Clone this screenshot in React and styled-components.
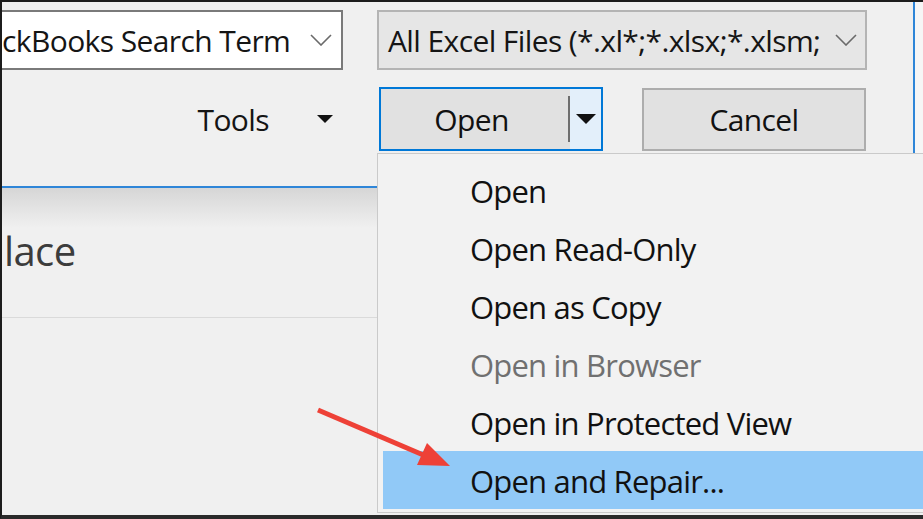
import React from 'react';
import styled, { createGlobalStyle } from 'styled-components';

const GlobalStyle = createGlobalStyle`
    html, body {
        margin: 0;
        padding: 0;
        background: #f0f0f0;
    }
    body {
        font-family: "Open Sans", "Noto Sans", sans-serif;
        color: #111;
    }
`;

const menuItems = [
    { label: "Open" },
    { label: "Open Read-Only" },
    { label: "Open as Copy" },
    { label: "Open in Browser", disabled: true },
    { label: "Open in Protected View" },
    { label: "Open and Repair...", active: true },
];

function Chevron() {
    return (
        <svg width="22" height="12" viewBox="0 0 22 12">
            <polyline points="1,1 11,11 21,1" fill="none" stroke="#6a6a6a" strokeWidth="1.6" />
        </svg>
    );
}

function Caret({ width, height }) {
    return (
        <svg width={width} height={height} viewBox={`0 0 ${width} ${height}`}>
            <polygon points={`0,0 ${width},0 ${width / 2},${height}`} fill="#111" />
        </svg>
    );
}

function App() {
    return (
        <Frame>
            <GlobalStyle />
            <TopRow>
                <TopArea>
                    <SearchBox>
                        <FieldText>ckBooks Search Term</FieldText>
                        <Chevron />
                    </SearchBox>
                    <FilterCombo>
                        <FieldText>All Excel Files (*.xl*;*.xlsx;*.xlsm;</FieldText>
                        <Chevron />
                    </FilterCombo>
                    <ToolsButton>
                        <span>Tools</span>
                        <Caret width={16} height={8} />
                    </ToolsButton>
                    <ButtonRow>
                        <SplitButton>
                            <SplitMain>Open</SplitMain>
                            <SplitDivider />
                            <SplitArrow>
                                <Caret width={20} height={10} />
                            </SplitArrow>
                        </SplitButton>
                        <PlainButton>Cancel</PlainButton>
                    </ButtonRow>
                </TopArea>
                <Gutter />
            </TopRow>

            <LowerPane>
                <BlueRule />
                <Shade />
                <PlaceRow>lace</PlaceRow>
            </LowerPane>

            <Menu>
                {menuItems.map((item) => (
                    <MenuItem key={item.label} $disabled={item.disabled} $active={item.active}>
                        {item.label}
                    </MenuItem>
                ))}
            </Menu>

            <Annotation width="923" height="519" viewBox="0 0 923 519">
                <line x1="318" y1="410" x2="428" y2="457" stroke="#ee4137" strokeWidth="5" />
                <polygon points="450,466 417,465 427,443" fill="#ee4137" />
            </Annotation>
        </Frame>
    );
}

const Frame = styled.div`
    position: relative;
    width: 923px;
    height: 519px;
    box-sizing: border-box;
    border-top: 2px solid #1c1c1c;
    border-left: 2px solid #1c1c1c;
    border-bottom: 4px solid #2a2a2a;
    background: #f0f0f0;
    overflow: hidden;
`;

const TopRow = styled.div`
    display: flex;
    height: 153px;
    background: #f6f6f6;
`;

const TopArea = styled.div`
    width: 913px;
    display: grid;
    grid-template-columns: 375px 1fr;
    grid-template-rows: 60px 64px;
    row-gap: 17px;
    padding-top: 8px;
    box-sizing: border-box;
    border-right: 2px solid #2f86d8;
    background: #f0f0f0;
`;

const Gutter = styled.div`
    flex: 1;
`;

const FieldText = styled.span`
    font-size: 30px;
    letter-spacing: -0.6px;
    white-space: nowrap;
    color: #151515;
`;

const SearchBox = styled.div`
    margin-left: -20px;
    width: 361px;
    box-sizing: border-box;
    display: flex;
    align-items: center;
    justify-content: space-between;
    padding: 0 9px 0 18px;
    background: #ffffff;
    border: 2px solid #7a7a7a;
`;

const FilterCombo = styled.div`
    width: 490px;
    box-sizing: border-box;
    display: flex;
    align-items: center;
    justify-content: space-between;
    padding: 0 8px 0 9px;
    background: #e6e6e6;
    border: 2px solid #b4b4b4;
`;

const ToolsButton = styled.div`
    display: flex;
    align-items: center;
    justify-content: flex-end;
    gap: 48px;
    margin-right: 44px;
    font-size: 30px;
    letter-spacing: -0.6px;
    color: #151515;
`;

const ButtonRow = styled.div`
    display: flex;
    gap: 39px;
    padding-left: 2px;
`;

const SplitButton = styled.div`
    width: 224px;
    box-sizing: border-box;
    display: flex;
    border: 2px solid #0078d7;
    background: #e1e1e1;
`;

const SplitMain = styled.div`
    flex: 1;
    display: flex;
    align-items: center;
    justify-content: center;
    font-size: 30px;
    letter-spacing: -0.6px;
    padding-right: 6px;
`;

const SplitDivider = styled.div`
    width: 2px;
    margin: 7px 0;
    background: #6e6e6e;
`;

const SplitArrow = styled.div`
    width: 31px;
    display: flex;
    align-items: center;
    justify-content: center;
    background: #e3effa;
`;

const PlainButton = styled.div`
    width: 224px;
    box-sizing: border-box;
    display: flex;
    align-items: center;
    justify-content: center;
    margin-top: 1px;
    border: 2px solid #adadad;
    background: #e1e1e1;
    font-size: 30px;
    letter-spacing: -0.6px;
`;

const LowerPane = styled.div`
    width: 375px;
    padding-top: 31px;
`;

const BlueRule = styled.div`
    height: 2px;
    background: #2f86d8;
`;

const Shade = styled.div`
    height: 40px;
    background: linear-gradient(#d6d6d6, #f0f0f0);
`;

const PlaceRow = styled.div`
    height: 92px;
    box-sizing: border-box;
    border-bottom: 1px solid #dadada;
    margin-top: -2px;
    padding-left: 2px;
    font-size: 40px;
    line-height: 50px;
    letter-spacing: -0.6px;
    color: #3c3c3c;
`;

const Menu = styled.div`
    position: absolute;
    top: 151px;
    left: 375px;
    right: -2px;
    bottom: 2px;
    box-sizing: border-box;
    padding: 7px 0 3px 5px;
    background: #f2f2f2;
    border: 1px solid #cacaca;
`;

const MenuItem = styled.div`
    height: 58px;
    box-sizing: border-box;
    padding: 2px 0 0 87px;
    line-height: 56px;
    font-size: 31px;
    letter-spacing: -0.8px;
    white-space: nowrap;
    color: ${(p) => (p.$disabled ? '#707070' : '#111')};
    background: ${(p) => (p.$active ? '#91c9f7' : 'transparent')};
`;

const Annotation = styled.svg`
    position: absolute;
    top: -2px;
    left: -2px;
    pointer-events: none;
`;

export default App;
